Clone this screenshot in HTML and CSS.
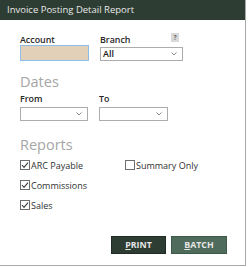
FILE: index.html
```html
<!DOCTYPE html>
<html>
<head>
    <link rel="stylesheet" href="styles.css">
</head>
<body>
    <div class="dialog">
        <div class="titlebar">Invoice Posting Detail Report</div>

        <div class="content">
            <div class="field-row">
                <div class="field field-account">
                    <div class="label">Account</div>
                    <div class="text-input"></div>
                </div>
                <div class="field field-branch">
                    <div class="label-row">
                        <span class="label">Branch</span>
                        <span class="help">?</span>
                    </div>
                    <div class="select">
                        <span class="select-value">All</span>
                        <svg class="chevron" width="6" height="4" viewBox="0 0 6 4"><polyline points="0.5,0.5 3,3 5.5,0.5" fill="none" stroke="#8a8a8a" stroke-width="1"/></svg>
                    </div>
                </div>
            </div>

            <div class="section-title section-dates">Dates</div>
            <div class="field-row">
                <div class="field field-from">
                    <div class="label">From</div>
                    <div class="select">
                        <span class="select-value"></span>
                        <svg class="chevron" width="6" height="4" viewBox="0 0 6 4"><polyline points="0.5,0.5 3,3 5.5,0.5" fill="none" stroke="#8a8a8a" stroke-width="1"/></svg>
                    </div>
                </div>
                <div class="field field-to">
                    <div class="label">To</div>
                    <div class="select">
                        <span class="select-value"></span>
                        <svg class="chevron" width="6" height="4" viewBox="0 0 6 4"><polyline points="0.5,0.5 3,3 5.5,0.5" fill="none" stroke="#8a8a8a" stroke-width="1"/></svg>
                    </div>
                </div>
            </div>

            <div class="section-title section-reports">Reports</div>
            <div class="checks">
                <label class="check">
                    <svg width="10" height="10" viewBox="0 0 10 10"><rect x="0.5" y="0.5" width="9" height="9" fill="#fff" stroke="#6e6e6e"/><polyline points="2,5 4,7.3 8,2.6" fill="none" stroke="#3c3c3c" stroke-width="1.1"/></svg>
                    <span>ARC Payable</span>
                </label>
                <label class="check">
                    <svg width="10" height="10" viewBox="0 0 10 10"><rect x="0.5" y="0.5" width="9" height="9" fill="#fff" stroke="#6e6e6e"/></svg>
                    <span>Summary Only</span>
                </label>
                <label class="check">
                    <svg width="10" height="10" viewBox="0 0 10 10"><rect x="0.5" y="0.5" width="9" height="9" fill="#fff" stroke="#6e6e6e"/><polyline points="2,5 4,7.3 8,2.6" fill="none" stroke="#3c3c3c" stroke-width="1.1"/></svg>
                    <span>Commissions</span>
                </label>
                <div></div>
                <label class="check">
                    <svg width="10" height="10" viewBox="0 0 10 10"><rect x="0.5" y="0.5" width="9" height="9" fill="#fff" stroke="#6e6e6e"/><polyline points="2,5 4,7.3 8,2.6" fill="none" stroke="#3c3c3c" stroke-width="1.1"/></svg>
                    <span>Sales</span>
                </label>
            </div>

            <div class="actions">
                <button class="btn btn-print"><u>P</u>RINT</button>
                <button class="btn btn-batch"><u>B</u>ATCH</button>
            </div>
        </div>
    </div>
</body>
</html>
```

FILE: styles.css
```css
:root {
    --title-bg: #2e3d33;
    --batch-bg: #4e6b5b;
    --heading-color: #a6a6a6;
}

* {
    box-sizing: border-box;
}

body {
    margin: 0;
    padding: 0;
    background: #fff;
    font-family: "Open Sans", "Liberation Sans", sans-serif;
    color: #262626;
}

.dialog {
    width: 246px;
    height: 266px;
    border-right: 1px solid #a8a8a8;
    border-bottom: 1px solid #a8a8a8;
    background: #fff;
}

.titlebar {
    height: 20px;
    line-height: 20px;
    padding-left: 7px;
    background: var(--title-bg);
    color: #e8e8e8;
    font-size: 9.5px;
}

.content {
    padding: 15px 18px 0 20px;
}

.field-row {
    display: flex;
    gap: 11px;
}

.label {
    font-size: 8.9px;
    font-weight: 600;
    line-height: 10px;
    height: 10px;
}

.label-row {
    display: flex;
    justify-content: space-between;
    align-items: flex-start;
    height: 10px;
}

.help {
    width: 8px;
    height: 9px;
    margin-top: -2px;
    margin-right: 4px;
    background: #d9d9d9;
    color: #6a6a6a;
    font-size: 6.5px;
    font-weight: 700;
    line-height: 9px;
    text-align: center;
}

.field-account {
    width: 69px;
}

.field-branch {
    width: 83px;
}

.text-input {
    height: 16px;
    background: #e2d0b8;
    border: 1px solid #8fbde9;
}

.select {
    display: flex;
    align-items: center;
    justify-content: space-between;
    height: 14px;
    margin-top: 2px;
    padding: 0 5px 0 2px;
    border: 1px solid #acacac;
    background: #fff;
}

.select-value {
    font-size: 9px;
    font-weight: 600;
    line-height: 12px;
    color: #1a1a1a;
}

.field-from {
    width: 68px;
}

.field-to {
    width: 69px;
}

.field-from .label,
.field-to .label {
    margin-top: 4px;
}

.field-from .select,
.field-to .select {
    margin-top: 3px;
}

.section-title {
    font-size: 14.5px;
    line-height: 17px;
    color: var(--heading-color);
}

.section-dates {
    margin-top: 12px;
}

.section-reports {
    margin-top: 15px;
}

.checks {
    display: grid;
    grid-template-columns: 105px auto;
    row-gap: 10px;
    margin-top: 7px;
}

.check {
    display: flex;
    align-items: center;
    gap: 1px;
    height: 10px;
    font-size: 9px;
    color: #303030;
}

.check svg {
    flex: none;
}

.actions {
    display: flex;
    justify-content: flex-end;
    gap: 5px;
    margin-top: 26px;
}

.btn {
    height: 18px;
    padding: 0;
    border: 1px solid #1f2b23;
    color: #e6e6e6;
    font-family: "Open Sans", "Liberation Sans", sans-serif;
    font-size: 8.8px;
    font-weight: 700;
    line-height: 16px;
    text-align: center;
}

.btn-print {
    width: 55px;
    background: var(--title-bg);
}

.btn-batch {
    width: 56px;
    background: var(--batch-bg);
    border-color: #3f5a4b;
}
```
